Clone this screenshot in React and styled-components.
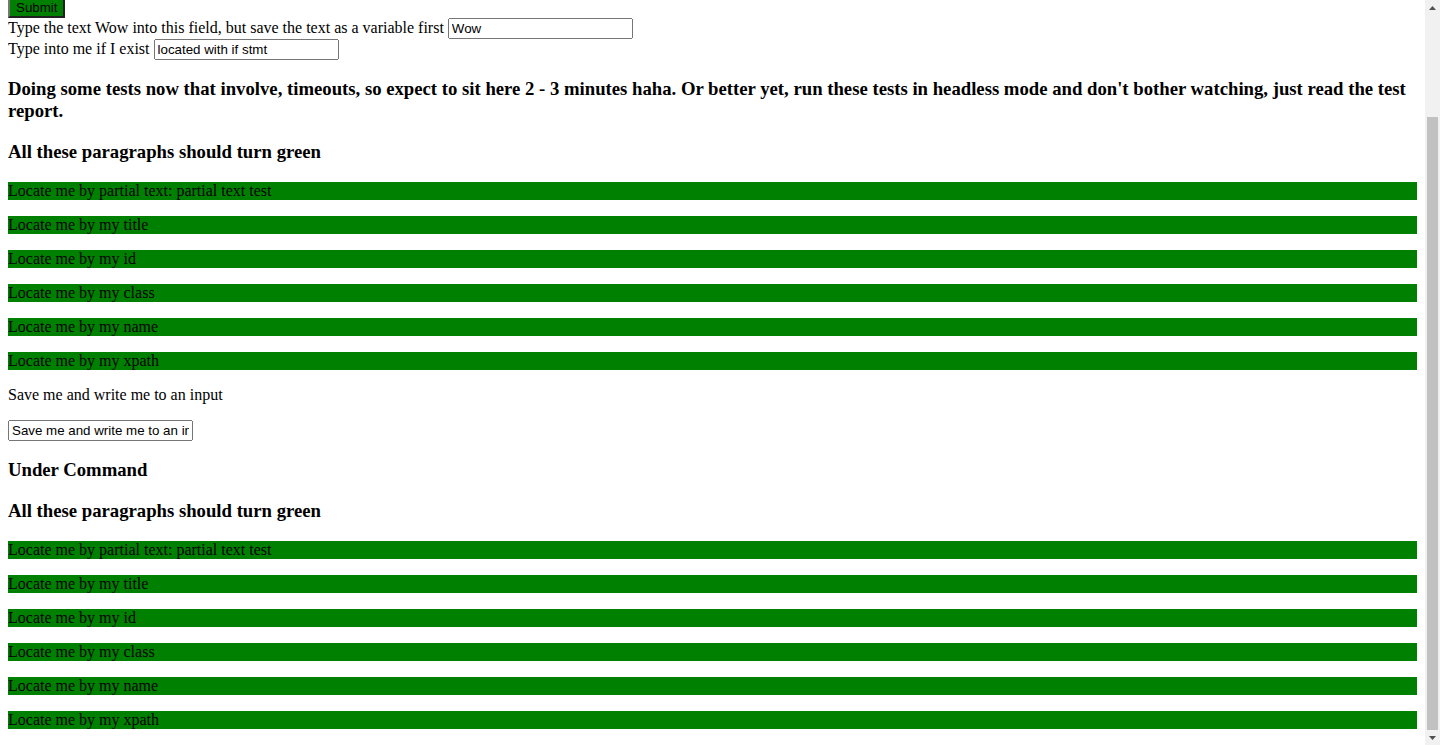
import React, {useLayoutEffect} from 'react';
import styled, {createGlobalStyle} from "styled-components";

const GlobalStyle = createGlobalStyle`
  body {
    margin: 8px 23px 8px 8px;
    font-family: "Liberation Serif", "Times New Roman", serif;
    font-size: 16px;
    color: #000;
    background: #fff;
  }
`

// the window's own scrollbar is hidden in the shot, so draw one over the edge
const ScrollBar = styled.div`
  position: fixed;
  top: 0;
  right: 0;
  width: 15px;
  height: 100vh;
  background: #f1f1f1;
  display: flex;
  flex-direction: column;
`

const ScrollArrow = styled.div`
  height: 15px;
  flex: none;
  display: flex;
  align-items: center;
  justify-content: center;
`

const ScrollTrack = styled.div`
  flex: 1;
  display: flex;
  flex-direction: column;
  justify-content: flex-end;
  padding: 0 2px;
`

const ScrollThumb = styled.div`
  height: 613px;
  background: #c1c1c1;
`

const Arrow = ({down}) => (
    <svg width="7" height="4" viewBox="0 0 7 4">
        <polygon points={down ? '0,0 7,0 3.5,4' : '0,4 7,4 3.5,0'} fill="#505050"/>
    </svg>
)

const Heading = styled.h3`
  font-size: 18.72px;
  font-weight: bold;
  margin: 18.72px 0;
`

const Form = styled.form`
  margin: 0 0 -1px;
`

const TextInput = styled.input`
  font-family: "Liberation Sans", Arial, sans-serif;
  font-size: 13.333px;
`

const SubmitButton = styled.button`
  font-family: "Liberation Sans", Arial, sans-serif;
  font-size: 13.333px;
  padding: 1px 6px;
  background: green;
  color: #000;
  border: 2px outset #767676;
`

const Para = styled.p`
  margin: 16px 0;
  background: ${props => props.$green ? 'green' : 'transparent'};
`

const locators = [
    'Locate me by partial text: partial text test',
    'Locate me by my title',
    'Locate me by my id',
    'Locate me by my class',
    'Locate me by my name',
    'Locate me by my xpath',
]

const GreenList = () => (
    <>
        <Heading>All these paragraphs should turn green</Heading>
        {locators.map((text) => (
            <Para $green key={text}>{text}</Para>
        ))}
    </>
)

const App = () => {
    useLayoutEffect(() => {
        window.scrollTo(0, document.documentElement.scrollHeight)
    }, [])

    return (
        <>
            <GlobalStyle/>
            <Heading>Form tests</Heading>
            <Form onSubmit={(e) => e.preventDefault()}>
                First name <TextInput type="text" name="first"/><br/>
                Last name <TextInput type="text" name="last"/><br/>
                Email <TextInput type="text" name="email"/><br/>
                <SubmitButton type="submit">Submit</SubmitButton><br/>
                Type the text Wow into this field, but save the text as a variable first <TextInput type="text" defaultValue="Wow"/><br/>
                Type into me if I exist <TextInput type="text" defaultValue="located with if stmt"/>
            </Form>
            <Heading>Doing some tests now that involve, timeouts, so expect to sit here 2 - 3 minutes haha. Or better yet, run these tests in headless mode and don't bother watching, just read the test report.</Heading>
            <GreenList/>
            <Para>Save me and write me to an input</Para>
            <Para>
                <TextInput type="text" defaultValue="Save me and write me to an input"/>
            </Para>
            <Heading>Under Command</Heading>
            <GreenList/>
            <ScrollBar>
                <ScrollArrow><Arrow/></ScrollArrow>
                <ScrollTrack><ScrollThumb/></ScrollTrack>
                <ScrollArrow><Arrow down/></ScrollArrow>
            </ScrollBar>
        </>
    );
};

export default App;
